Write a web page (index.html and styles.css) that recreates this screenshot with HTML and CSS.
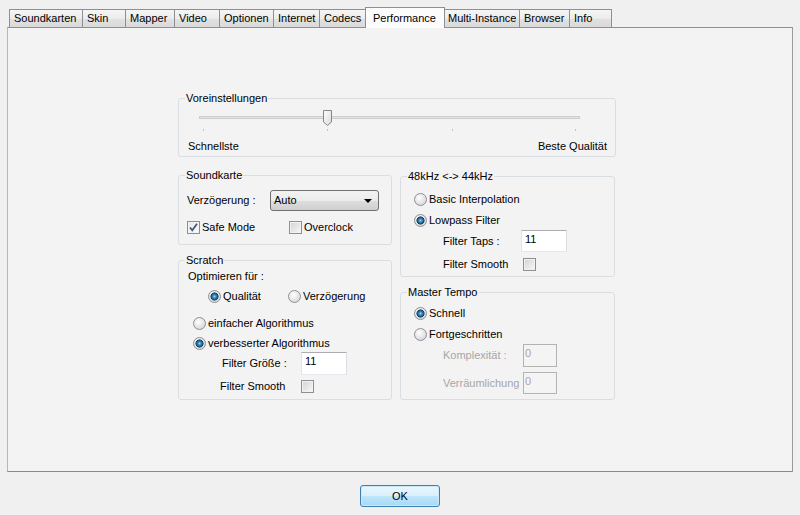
FILE: index.html
```html
<!DOCTYPE html>
<html lang="de">
<head>
  <meta charset="UTF-8" />
  <title>Einstellungen - Performance</title>
  <link rel="stylesheet" href="styles.css">
</head>
<body>
  <div class="tabs">
    <div class="tab">Soundkarten</div>
    <div class="tab">Skin</div>
    <div class="tab">Mapper</div>
    <div class="tab">Video</div>
    <div class="tab">Optionen</div>
    <div class="tab">Internet</div>
    <div class="tab">Codecs</div>
    <div class="tab active">Performance</div>
    <div class="tab">Multi-Instance</div>
    <div class="tab">Browser</div>
    <div class="tab">Info</div>
  </div>

  <div class="panel">
    <fieldset class="group presets">
      <legend>Voreinstellungen</legend>
      <svg class="slider" width="400" height="26" viewBox="0 0 400 26">
        <defs>
          <linearGradient id="thumb" x1="0" y1="0" x2="1" y2="1">
            <stop offset="0" stop-color="#ffffff"/>
            <stop offset="1" stop-color="#d9d9d9"/>
          </linearGradient>
        </defs>
        <rect x="9.5" y="8.5" width="380" height="2" fill="#e4e4e4" stroke="#cdcdcd"/>
        <rect x="13" y="21" width="1" height="2" fill="#c4c4c4"/>
        <rect x="137" y="21" width="1" height="2" fill="#c4c4c4"/>
        <rect x="262" y="21" width="1" height="2" fill="#c4c4c4"/>
        <rect x="385" y="21" width="1" height="2" fill="#c4c4c4"/>
        <path d="M133.5 2.5 H141.5 V14 L137.5 17.5 L133.5 14 Z" fill="url(#thumb)" stroke="#858585"/>
      </svg>
      <div class="slider-labels">
        <span>Schnellste</span>
        <span>Beste Qualität</span>
      </div>
    </fieldset>

    <div class="columns">
      <div class="col">
        <fieldset class="group soundcard">
          <legend>Soundkarte</legend>
          <div class="row delay">
            <span class="label">Verzögerung :</span>
            <div class="combo">Auto<span class="arrow"></span></div>
          </div>
          <div class="row modes">
            <span class="opt first"><span class="check on"><svg width="11" height="11" viewBox="0 0 11 11"><path d="M2 5.5 L4.3 8.3 L9 1.8" fill="none" stroke="#3f5486" stroke-width="1.7"/></svg></span>Safe Mode</span>
            <span class="opt"><span class="check"></span>Overclock</span>
          </div>
        </fieldset>

        <fieldset class="group scratch">
          <legend>Scratch</legend>
          <div class="row optimize">Optimieren für :</div>
          <div class="row target">
            <span class="opt first"><span class="radio on"></span>Qualität</span>
            <span class="opt"><span class="radio"></span>Verzögerung</span>
          </div>
          <div class="row algo-simple"><span class="opt"><span class="radio"></span>einfacher Algorithmus</span></div>
          <div class="row algo-better"><span class="opt"><span class="radio on"></span>verbesserter Algorithmus</span></div>
          <div class="row size">
            <span class="label">Filter Größe :</span>
            <div class="edit tall">11</div>
          </div>
          <div class="row smooth">
            <span class="label">Filter Smooth</span>
            <span class="check"></span>
          </div>
        </fieldset>
      </div>

      <div class="col right">
        <fieldset class="group resample">
          <legend>48kHz &lt;-&gt; 44kHz</legend>
          <div class="row basic"><span class="opt"><span class="radio"></span>Basic Interpolation</span></div>
          <div class="row lowpass"><span class="opt"><span class="radio on"></span>Lowpass Filter</span></div>
          <div class="row taps">
            <span class="label">Filter Taps :</span>
            <div class="edit">11</div>
          </div>
          <div class="row taps-smooth">
            <span class="label">Filter Smooth</span>
            <span class="check"></span>
          </div>
        </fieldset>

        <fieldset class="group tempo">
          <legend>Master Tempo</legend>
          <div class="row fast"><span class="opt"><span class="radio on"></span>Schnell</span></div>
          <div class="row advanced"><span class="opt"><span class="radio"></span>Fortgeschritten</span></div>
          <div class="row complexity">
            <span class="label dim">Komplexität :</span>
            <div class="edit small tall off">0</div>
          </div>
          <div class="row spatial">
            <span class="label dim">Verräumlichung</span>
            <div class="edit small off">0</div>
          </div>
        </fieldset>
      </div>
    </div>
  </div>

  <div class="footer">
    <button class="ok">OK</button>
  </div>
</body>
</html>
```

FILE: styles.css
```css
body {
  margin: 0;
  background-color: #f0f0f0;
  font-family: "Liberation Sans", Arial, sans-serif;
  font-size: 11px;
  line-height: 13px;
  color: #000;
}

/* tab strip */
.tabs {
  display: grid;
  grid-template-columns: 73px 43px 49px 45px 54px 46px 48px 76px 76px 50px 43px;
  justify-content: start;
  padding: 9px 0 0 9px;
  height: 18px;
}

.tab {
  border: 1px solid #8c8f97;
  border-right: none;
  border-bottom: none;
  padding-left: 4px;
  line-height: 17px;
  white-space: nowrap;
  background: linear-gradient(#f5f5f5, #ececec 50%, #e1e1e1 51%, #dadada);
}

.tab:last-child {
  border-right: 1px solid #8c8f97;
}

.tab.active {
  position: relative;
  z-index: 1;
  margin: -2px -2px -1px -2px;
  padding: 2px 0 0 7px;
  border-right: 1px solid #8c8f97;
  background: #fcfcfc;
}

/* page area */
.panel {
  margin: 0 7px;
  height: 445px;
  box-sizing: border-box;
  border: 1px solid #8c8f97;
  border-color: #8c8f97 #9a9a9a #8a8a8a #b7b7b7;
  background-color: #f3f3f3;
  padding: 64px 0 0 170px;
}

.group {
  box-sizing: border-box;
  margin: 0;
  padding: 0;
  min-width: 0;
  border: 1px solid #d9dee2;
  border-radius: 3px;
}

.group legend {
  margin-left: 6px;
  padding: 0 1px;
  line-height: 13px;
}

.presets {
  width: 438px;
  padding-bottom: 3px;
}

.slider {
  display: block;
  margin: 3px 0 0 11px;
}

.slider-labels {
  display: flex;
  justify-content: space-between;
  margin-top: 6px;
  padding: 0 8px 0 9px;
}

.columns {
  display: grid;
  grid-template-columns: 214px 215px;
  column-gap: 8px;
  margin-top: 12px;
  align-items: start;
}

.col.right {
  padding-top: 1px;
}

.row {
  display: flex;
  align-items: center;
  white-space: nowrap;
}

.opt {
  display: flex;
  align-items: center;
  gap: 2px;
  height: 13px;
}

.label {
  flex: none;
}

.dim {
  color: #a6a6a6;
}

/* controls */
.radio {
  flex: none;
  width: 13px;
  height: 13px;
  box-sizing: border-box;
  border: 1px solid #8d9096;
  border-radius: 50%;
  background: radial-gradient(circle at 40% 35%, #ffffff, #d4d4d4 85%);
}

.radio.on {
  background:
    radial-gradient(circle at 50% 50%, #9fd6f2 0, #3d8ec4 1.5px, #17547f 3.2px, #0e3a5c 3.8px, transparent 4.3px),
    radial-gradient(circle at 40% 35%, #ffffff, #d4d4d4 85%);
}

.check {
  flex: none;
  display: flex;
  align-items: center;
  justify-content: center;
  width: 13px;
  height: 13px;
  box-sizing: border-box;
  border: 1px solid #8f8f8f;
  background: linear-gradient(135deg, #d2d2d2, #f9f9f9);
  box-shadow: inset 0 0 0 1px #f2f2f2;
}

.check.on {
  background: linear-gradient(135deg, #e6e6e6, #fdfdfd);
}

.combo {
  width: 109px;
  height: 21px;
  box-sizing: border-box;
  display: flex;
  align-items: center;
  justify-content: space-between;
  padding: 0 6px 0 3px;
  border: 1px solid #707070;
  border-radius: 3px;
  background: linear-gradient(#f3f3f3, #ebebeb 50%, #dddddd 51%, #cfcfcf);
}

.arrow {
  width: 0;
  height: 0;
  border-left: 4px solid transparent;
  border-right: 4px solid transparent;
  border-top: 4px solid #000;
}

.edit {
  width: 46px;
  height: 22px;
  box-sizing: border-box;
  padding: 2px 0 0 3px;
  background-color: #fff;
  border: 1px solid;
  border-color: #abadb3 #dbdfe6 #e3e9ef #e2e3ea;
}

.edit.tall {
  height: 23px;
}

.edit.small {
  width: 34px;
}

.edit.off {
  padding-left: 1px;
  background-color: #f4f4f4;
  border-color: #b3b3b3;
  color: #a6a6a6;
}

/* Soundkarte */
.soundcard {
  padding-bottom: 10px;
}

.delay {
  margin-top: 8px;
  padding-left: 8px;
}

.delay .label {
  width: 83px;
}

.modes {
  margin-top: 10px;
  padding-left: 8px;
}

.modes .first {
  width: 102px;
}

/* Scratch */
.scratch {
  margin-top: 9px;
  padding-bottom: 6px;
}

.optimize {
  margin-top: 3px;
  padding-left: 9px;
}

.target {
  margin-top: 7px;
  padding-left: 29px;
}

.target .first {
  width: 80px;
}

.algo-simple {
  margin-top: 14px;
  padding-left: 14px;
}

.algo-better {
  margin-top: 7px;
  padding-left: 14px;
}

.size {
  margin-top: 2px;
  padding-left: 43px;
}

.size .label {
  width: 79px;
}

.smooth {
  margin-top: 5px;
  padding-left: 41px;
}

.smooth .label {
  width: 81px;
}

/* 48kHz <-> 44kHz */
.resample {
  padding-bottom: 5px;
}

.basic {
  margin-top: 10px;
  padding-left: 13px;
}

.lowpass {
  margin-top: 8px;
  padding-left: 13px;
}

.taps {
  margin-top: 3px;
  padding-left: 42px;
}

.taps .label {
  width: 78px;
}

.taps-smooth {
  margin-top: 6px;
  padding-left: 42px;
}

.taps-smooth .label {
  width: 80px;
}

/* Master Tempo */
.tempo {
  margin-top: 9px;
  padding-bottom: 5px;
}

.fast {
  margin-top: 8px;
  padding-left: 13px;
}

.advanced {
  margin-top: 8px;
  padding-left: 13px;
}

.complexity {
  margin-top: 3px;
  padding-left: 42px;
}

.spatial {
  margin-top: 5px;
  padding-left: 42px;
}

.complexity .label,
.spatial .label {
  width: 80px;
}

/* buttons */
.footer {
  padding-top: 13px;
  text-align: center;
}

.ok {
  width: 80px;
  height: 22px;
  padding: 0;
  font: inherit;
  color: #000;
  border: 1px solid #3c7fb1;
  border-radius: 3px;
  background: linear-gradient(#eaf6fd, #d9f0fc 50%, #bee6fd 51%, #a7d9f5);
  box-shadow: inset 0 0 0 1px #c8ecfb;
}
```
